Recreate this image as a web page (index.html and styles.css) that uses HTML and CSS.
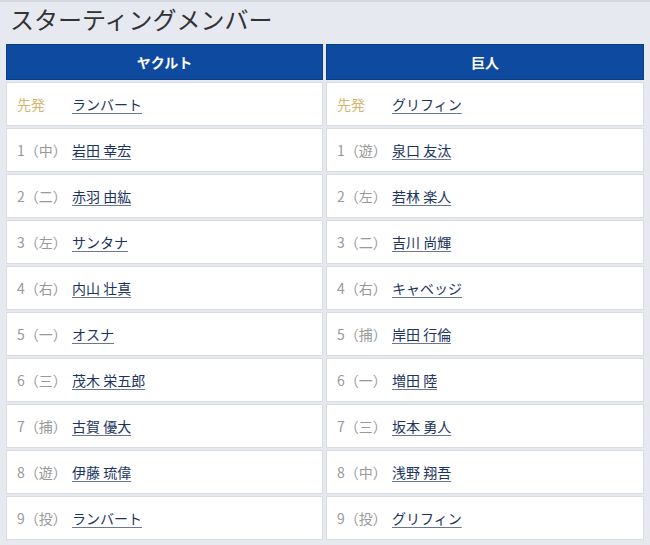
FILE: index.html
```html
<!DOCTYPE html>
<html lang="ja">
<head>
<meta charset="utf-8">
<link rel="stylesheet" href="styles.css">
</head>
<body>
<div class="page">
  <h2 class="title">スターティングメンバー</h2>
  <div class="lineup">
    <div class="team">
      <div class="head">ヤクルト</div>
      <div class="row"><span class="pos starter">先発</span><a href="#" class="name">ランバート</a></div>
      <div class="row"><span class="pos">1（中）</span><a href="#" class="name">岩田 幸宏</a></div>
      <div class="row"><span class="pos">2（二）</span><a href="#" class="name">赤羽 由紘</a></div>
      <div class="row"><span class="pos">3（左）</span><a href="#" class="name">サンタナ</a></div>
      <div class="row"><span class="pos">4（右）</span><a href="#" class="name">内山 壮真</a></div>
      <div class="row"><span class="pos">5（一）</span><a href="#" class="name">オスナ</a></div>
      <div class="row"><span class="pos">6（三）</span><a href="#" class="name">茂木 栄五郎</a></div>
      <div class="row"><span class="pos">7（捕）</span><a href="#" class="name">古賀 優大</a></div>
      <div class="row"><span class="pos">8（遊）</span><a href="#" class="name">伊藤 琉偉</a></div>
      <div class="row"><span class="pos">9（投）</span><a href="#" class="name">ランバート</a></div>
    </div>
    <div class="team">
      <div class="head">巨人</div>
      <div class="row"><span class="pos starter">先発</span><a href="#" class="name">グリフィン</a></div>
      <div class="row"><span class="pos">1（遊）</span><a href="#" class="name">泉口 友汰</a></div>
      <div class="row"><span class="pos">2（左）</span><a href="#" class="name">若林 楽人</a></div>
      <div class="row"><span class="pos">3（二）</span><a href="#" class="name">吉川 尚輝</a></div>
      <div class="row"><span class="pos">4（右）</span><a href="#" class="name">キャベッジ</a></div>
      <div class="row"><span class="pos">5（捕）</span><a href="#" class="name">岸田 行倫</a></div>
      <div class="row"><span class="pos">6（一）</span><a href="#" class="name">増田 陸</a></div>
      <div class="row"><span class="pos">7（三）</span><a href="#" class="name">坂本 勇人</a></div>
      <div class="row"><span class="pos">8（中）</span><a href="#" class="name">浅野 翔吾</a></div>
      <div class="row"><span class="pos">9（投）</span><a href="#" class="name">グリフィン</a></div>
    </div>
  </div>
</div>
</body>
</html>
```
FILE: styles.css
```css
html, body {
  margin: 0;
  padding: 0;
}
body {
  background: #e6e9f0;
  font-family: "Noto Sans CJK JP", "Noto Sans", sans-serif;
  width: 650px;
  height: 545px;
  overflow: hidden;
}
.page {
  border-top: 2px solid #d5d8df;
}
.title {
  margin: 0;
  padding: 0 0 0 10px;
  height: 42px;
  line-height: 34px;
  font-size: 24px;
  font-weight: normal;
  color: #333;
  letter-spacing: 0;
}
.lineup {
  display: grid;
  grid-template-columns: 317px 318px;
  column-gap: 3px;
  padding: 0 6px 0 6px;
}
.team {
  display: flex;
  flex-direction: column;
  gap: 2px;
}
.head {
  height: 36px;
  background: #0e4aa0;
  border: 1px solid #0b3c86;
  box-sizing: border-box;
  color: #fff;
  font-weight: bold;
  font-size: 14px;
  display: flex;
  align-items: center;
  justify-content: center;
}
.row {
  height: 44px;
  box-sizing: border-box;
  background: #fff;
  border: 1px solid #d9dce3;
  display: flex;
  align-items: center;
  padding-left: 10px;
  font-size: 14px;
}
.pos {
  width: 55px;
  color: #999;
  flex: none;
}
.pos.starter {
  color: #d5b56e;
}
.name {
  color: #1c3461;
  text-decoration: underline;
  text-underline-offset: 3px;
  text-decoration-color: #6a7790;
}
```
